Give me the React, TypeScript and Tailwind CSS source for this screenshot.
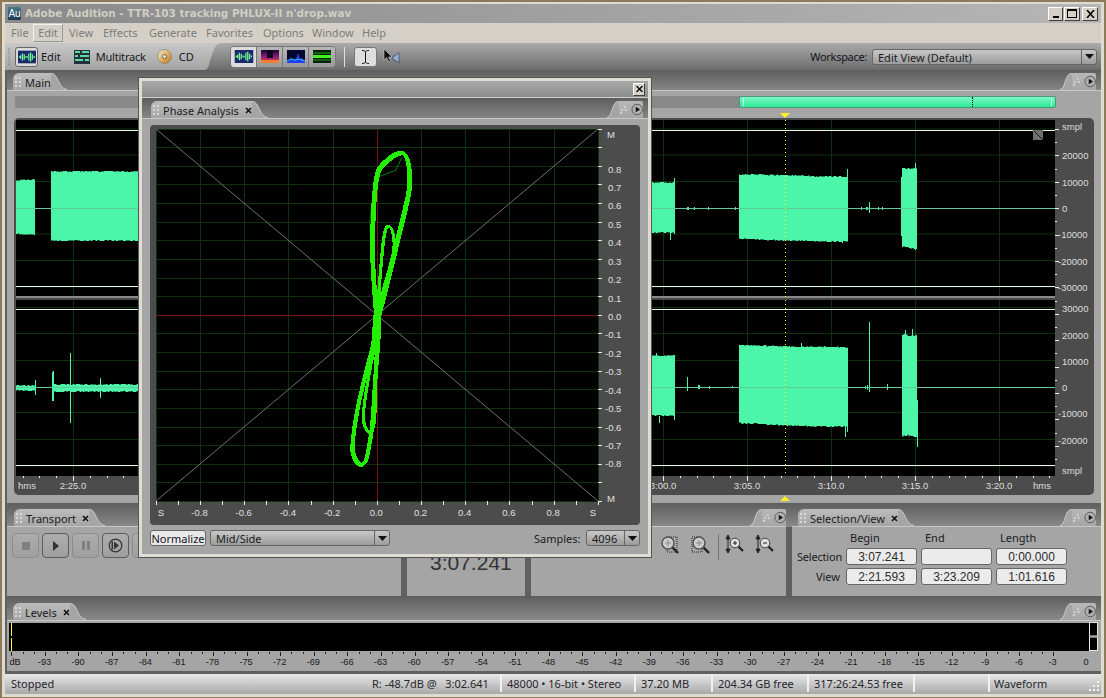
import React from "react";

const WAVE = "#4cf5a8";
let seed = 7;
const rnd = () => {
  seed = (seed * 1664525 + 1013904223) % 4294967296;
  return seed / 4294967296;
};

function block(x0: number, x1: number, t0: number, t1: number, b0: number, b1: number, j = 1.5) {
  const top: string[] = [];
  const bot: string[] = [];
  for (let x = x0; x <= x1; x++) {
    const k = (x - x0) / Math.max(1, x1 - x0);
    top.push(`${x},${Math.round(t0 + (t1 - t0) * k - rnd() * j)}`);
    bot.unshift(`${x},${Math.round(b0 + (b1 - b0) * k + rnd() * j)}`);
  }
  return top.concat(bot).join(" ");
}

function smooth(p: number[][], closed = true) {
  const n = p.length;
  const at = (i: number) => (closed ? p[(i + n) % n] : p[Math.max(0, Math.min(n - 1, i))]);
  let d = `M${p[0][0]} ${p[0][1]}`;
  for (let i = 0; i < (closed ? n : n - 1); i++) {
    const a = at(i - 1), b = at(i), c = at(i + 1), e = at(i + 2);
    d += `C${b[0] + (c[0] - a[0]) / 6} ${b[1] + (c[1] - a[1]) / 6} ${c[0] - (e[0] - b[0]) / 6} ${c[1] - (e[1] - b[1]) / 6} ${c[0]} ${c[1]}`;
  }
  return d;
}

const UPPER_BLOCKS = [
  block(16, 35, 181, 180, 233, 234),
  block(51, 139, 172, 172, 240, 240),
  block(651, 675, 183, 183, 232, 232, 1),
  block(739, 790, 175, 176, 238, 240),
  block(790, 848, 176, 178, 240, 241),
  block(902, 917, 169, 169, 246, 248),
];
const LOWER_BLOCKS = [
  block(16, 35, 386, 386, 390, 390, 1),
  block(52, 139, 385, 385, 391, 391, 1.5),
  block(651, 675, 356, 356, 415, 415, 1),
  block(739, 790, 346, 347, 422, 425),
  block(790, 848, 347, 348, 425, 426),
  block(902, 917, 336, 337, 434, 435, 3),
];
const SPIKES: number[][] = [
  [674, 178, 674, 234], [670, 232, 670, 240],
  [847, 169, 847, 236], [842, 238, 842, 243], [869, 202, 869, 213], [915, 163, 915, 240], [915, 245, 915, 250],
  [903, 177, 903, 236], [901, 177, 901, 236],
  [52, 372, 52, 401], [53, 371, 53, 401], [35, 380, 35, 395], [70, 353, 70, 423], [100, 378, 100, 398],
  [659, 416, 659, 423], [656, 353, 656, 360], [674, 355, 674, 420], [687, 377, 687, 391],
  [845, 420, 845, 437], [847, 420, 847, 432], [801, 343, 801, 350], [869, 322, 869, 392], [917, 400, 917, 447],
  [905, 330, 905, 340], [912, 329, 912, 340], [887, 384, 887, 390], [699, 385, 699, 389], [698, 385, 698, 389], [709, 386, 709, 389],
  [865, 386, 865, 389], [867, 385, 867, 390], [732, 386, 732, 388],
];
const ZERO_TICKS = [687, 688, 694, 708, 735, 861, 866, 867, 878, 882];

function Grip() {
  return (
    <svg width="8" height="13" viewBox="0 0 8 13" className="mr-[2px] shrink-0">
      {[1, 5, 9].map((y) => (
        <g key={y} fill="#d8d8d8">
          <rect x="0" y={y} width="2" height="2" />
          <rect x="4" y={y} width="2" height="2" />
        </g>
      ))}
    </svg>
  );
}

function XMark() {
  return (
    <svg width="7" height="7" viewBox="0 0 7 7" className="shrink-0">
      <path d="M1 1L6 6M6 1L1 6" stroke="#111" strokeWidth="1.6" />
    </svg>
  );
}

function Tab({ label, close = true }: { label: string; close?: boolean }) {
  return (
    <div className="flex h-[17px] items-stretch">
      <div className="flex items-center rounded-tl-[6px] bg-[linear-gradient(#bdbdbd,#a5a5a5)] pl-[2px] pt-[2px]">
        <Grip />
        <span className="text-[#1c1c22]">{label}</span>
        {close && <span className="ml-[6px] flex"><XMark /></span>}
      </div>
      <svg width="16" height="17" viewBox="0 0 16 17" className="block">
        <path d="M0 0C8 0 7 16 16 16V17H0Z" fill="#a5a5a5" />
        <path d="M0 .5C8 .5 7 16.5 16 16.5" fill="none" stroke="#c8c8c8" />
      </svg>
    </div>
  );
}

function Flyout() {
  return (
    <div className="flex h-[17px] items-stretch">
      <svg width="12" height="17" viewBox="0 0 12 17" className="block">
        <path d="M12 0C4 0 6 16 0 16V17H12Z" fill="#a5a5a5" />
        <path d="M12 .5C4 .5 6 16.5 0 16.5" fill="none" stroke="#c8c8c8" />
      </svg>
      <div className="flex w-[24px] items-center gap-[3px] rounded-tr-[2px] bg-[linear-gradient(#b8b8b8,#a5a5a5)] pl-[1px]">
        <svg width="8" height="8" viewBox="0 0 8 8" fill="#d4d4d4"><rect x="4" y="0" width="2" height="2" /><rect x="1" y="3" width="2" height="2" /><rect x="5" y="3" width="2" height="2" /><rect x="0" y="6" width="2" height="2" /></svg>
        <svg width="13" height="13" viewBox="0 0 13 13">
          <circle cx="6.5" cy="6.5" r="5.5" fill="#b0b0b0" stroke="#555" />
          <path d="M5 3.5L9.5 6.5L5 9.5Z" fill="#111" />
        </svg>
      </div>
    </div>
  );
}

function Combo({ w, label }: { w: string; label: string }) {
  return (
    <div className={`flex h-[16px] items-stretch rounded-[3px] border border-[#666] bg-[linear-gradient(#c8c8c8,#9c9c9c)] ${w}`}>
      <span className="flex-1 truncate pl-[5px] pt-[1px] leading-[14px] text-[#1a1a22]">{label}</span>
      <span className="flex w-[15px] items-center justify-center border-l border-[#666]">
        <svg width="9" height="5" viewBox="0 0 9 5"><path d="M0 0H9L4.5 5Z" fill="#111" /></svg>
      </span>
    </div>
  );
}

function TB({ children }: { children: React.ReactNode }) {
  return (
    <div className="flex h-[17px] w-[71px] items-center justify-center rounded-[3px] border border-[#666] bg-[#ebebeb] font-['Liberation_Sans'] text-[12px] text-[#2c2c2c]">
      {children}
    </div>
  );
}

function TransportBtn({ children, on }: { children: React.ReactNode; on?: boolean }) {
  return (
    <div className={`flex h-[25px] w-[27px] shrink-0 items-center justify-center rounded-[4px] border bg-[linear-gradient(#adadad,#9f9f9f)] ${on ? "border-[#5c5c5c]" : "border-[#8c8c8c]"}`}>
      {children}
    </div>
  );
}

function MiniWave({ w = 20, h = 14, bg = "#1c2a6c" }: { w?: number; h?: number; bg?: string }) {
  return (
    <svg width={w} height={h} viewBox="0 0 20 14">
      <rect width="20" height="14" fill={bg} />
      <path d="M1 7H3M3 5V9M5 3V11M7 4V10M9 6V8M10 7H11M12 3V11M14 2V12M16 4V10M18 6V8" stroke="#6cf58c" strokeWidth="1.4" />
    </svg>
  );
}

function ViewBtn({ on, children }: { on?: boolean; children: React.ReactNode }) {
  return (
    <div className={`flex h-[20px] w-[26px] items-center justify-center border-r border-[#777] last:border-r-0 ${on ? "bg-[#dcdcdc]" : "bg-[linear-gradient(#b8b8b8,#9a9a9a)]"}`}>
      {children}
    </div>
  );
}

function WaveformSvg() {
  const gridV = [73.5, 663.5, 747.5, 831.5, 915.5, 999.5];
  const gridH = [129, 155, 181.5, 234, 260.5, 287, 307.5, 333.5, 360.5, 412.5, 439.5, 466];
  const rightLabels: [string, number][] = [
    ["20000", 155], ["10000", 182], ["0", 208], ["-10000", 234], ["-20000", 261], ["-30000", 287],
    ["30000", 308], ["20000", 335], ["10000", 361], ["0", 387], ["-10000", 413], ["-20000", 440],
  ];
  const ticksL: number[] = [];
  for (let i = -3; i <= 3; i++) ticksL.push(i);
  const ticksR: number[] = [];
  for (let i = -1; i <= 23; i++) ticksR.push(i);
  const ticksY: number[] = [];
  for (let y = 129; y < 470; y += 13.2) ticksY.push(y);
  const labelsX: [string, number][] = [["2:25.0", 73], ["3:00.0", 663], ["3:05.0", 747], ["3:10.0", 831], ["3:15.0", 915], ["3:20.0", 999]];
  return (
    <svg viewBox="14 118 1080 377" width="1080" height="377" className="ml-[7px] block">
      <rect x="14" y="118" width="1080" height="377" rx="5" fill="#4c4c4c" />
      <rect x="16" y="120" width="1039" height="356" fill="#000" />
      <g stroke="#0c330c" strokeWidth="1">
        {gridV.map((x) => <line key={x} x1={x} x2={x} y1="120" y2="476" />)}
        {gridH.map((y) => <line key={y} x1="16" x2="1055" y1={y} y2={y} />)}
      </g>
      <g fill={WAVE}>
        {UPPER_BLOCKS.map((p, i) => <polygon key={i} points={p} />)}
        {LOWER_BLOCKS.map((p, i) => <polygon key={i} points={p} />)}
      </g>
      <g stroke={WAVE} strokeWidth="1" shapeRendering="crispEdges">
        {SPIKES.map((s, i) => <line key={i} x1={s[0] + 0.5} y1={s[1]} x2={s[2] + 0.5} y2={s[3]} />)}
        {ZERO_TICKS.map((x) => <line key={x} x1={x + 0.5} y1="207" x2={x + 0.5} y2="210" />)}
      </g>
      <g stroke="#5fcb98" strokeWidth="1" shapeRendering="crispEdges">
        <line x1="16" x2="1055" y1="208.5" y2="208.5" />
        <line x1="16" x2="1055" y1="387.5" y2="387.5" />
      </g>
      <g stroke="#f0f0f0" strokeWidth="1" shapeRendering="crispEdges">
        <line x1="16" x2="1055" y1="130.5" y2="130.5" />
        <line x1="16" x2="1055" y1="286.5" y2="286.5" />
        <line x1="16" x2="1055" y1="309.5" y2="309.5" />
        <line x1="16" x2="1055" y1="465.5" y2="465.5" />
      </g>
      <rect x="16" y="296" width="1039" height="2" fill="#8a8a8a" />
      <rect x="16" y="298" width="1039" height="2" fill="#484848" />
      <line x1="785.5" x2="785.5" y1="120" y2="476" stroke="#ffff30" strokeWidth="1" strokeDasharray="1 3" shapeRendering="crispEdges" />
      <path d="M1033 130H1043V140H1033Z" fill="#6e6e6e" />
      <path d="M1034 131L1043 140" stroke="#222" />
      <g stroke="#f0f0f0" shapeRendering="crispEdges">
        {ticksL.map((i) => {
          const x = Math.round(73 + i * 16.8) + 0.5;
          return <line key={i} x1={x} x2={x} y1="476" y2={i === 0 ? 481 : 478} />;
        })}
        {ticksR.map((i) => {
          const x = Math.round(663 + i * 16.8) + 0.5;
          return <line key={i} x1={x} x2={x} y1="476" y2={i % 5 === 0 ? 481 : 478} />;
        })}
        {ticksY.map((y, i) => <line key={i} x1="1055" x2={i % 2 === 0 ? 1059 : 1057} y1={Math.round(y) + 0.5} y2={Math.round(y) + 0.5} />)}
      </g>
      <g className="fill-[#dedede] font-['Liberation_Sans'] text-[9.5px]">
        <text x="18" y="489">hms</text>
        <text x="1042" y="489" textAnchor="middle">hms</text>
        <text x="1062" y="130">smpl</text>
        <text x="1062" y="474">smpl</text>
        <g textAnchor="middle">
          {labelsX.map(([t, x]) => <text key={t} x={x} y="489">{t}</text>)}
        </g>
        {rightLabels.map(([t, y], i) => (
          <text key={i} x={t.startsWith("-") ? 1058 : 1062} y={y + 4}>{t}</text>
        ))}
      </g>
    </svg>
  );
}

function PhasePlot() {
  const X = (v: number) => 377.3 + 221 * v;
  const Y = (v: number) => 315.3 - 186.2 * v;
  const hv: number[] = [];
  for (let i = -10; i <= 10; i++) hv.push(i / 10);
  const vv: number[] = [];
  for (let i = -5; i <= 5; i++) vv.push(i / 5);
  const upperO = [[376, 318], [372, 257], [373, 207], [377, 173], [387, 160], [398, 153], [405, 155], [409, 173], [408, 193], [400, 227], [392, 260], [382, 300], [377, 318]];
  const upperI = [[377, 313], [382, 250], [385, 230], [389, 226], [393, 235], [393, 253], [383, 290], [378, 313]];
  const lowerO = [[375, 316], [373, 343], [367, 367], [357, 410], [352, 447], [355, 460], [360, 465], [365, 462], [368, 450], [372, 423], [375, 377], [378, 337], [378, 316]];
  const lowerI = [[373, 353], [365, 397], [363, 420], [368, 432], [373, 427], [375, 403], [375, 367], [377, 343]];
  const green = "#22f000";
  return (
    <svg viewBox="150 125 490 400" width="490" height="400" className="block">
      <rect x="150" y="125" width="490" height="400" rx="4" fill="#4c4c4c" />
      <rect x="156" y="129" width="442" height="372" fill="#000" />
      <g stroke="#0c330c" shapeRendering="crispEdges">
        {hv.map((v) => <line key={v} x1="156" x2="598" y1={Y(v)} y2={Y(v)} />)}
        {vv.map((v) => <line key={v} y1="129" y2="501" x1={X(v)} x2={X(v)} />)}
      </g>
      <g stroke="#7a1414" shapeRendering="crispEdges">
        <line x1="156" x2="598" y1="315.5" y2="315.5" />
        <line x1="377.5" x2="377.5" y1="129" y2="501" />
      </g>
      <g stroke="#707070" strokeWidth="1">
        <line x1="156" y1="129" x2="598" y2="501" />
        <line x1="156" y1="501" x2="598" y2="129" />
      </g>
      <g fill="none" stroke="#0b7a0b" strokeWidth="1">
        <path d="M381 176L396 170L402 157" />
        <path d="M371 257L370 220L374 190" />
      </g>
      <g fill="none" stroke={green} strokeLinejoin="round" shapeRendering="crispEdges">
        <path d={smooth(upperO)} strokeWidth="3.4" />
        <path d={smooth(upperO.map(([x, y]) => [x + 1.6, y + 1.2]))} strokeWidth="3" />
        <path d={smooth(upperO.map(([x, y]) => [x - 0.8, y - 0.8]))} strokeWidth="1.6" />
        <path d={smooth(upperI)} strokeWidth="2.4" />
        <path d={smooth(upperI.map(([x, y]) => [x + 1, y + 0.5]))} strokeWidth="2" />
        <path d={smooth(lowerO)} strokeWidth="3.4" />
        <path d={smooth(lowerO.map(([x, y]) => [x + 1.2, y - 1]))} strokeWidth="3" />
        <path d={smooth(lowerI)} strokeWidth="2.4" />
        <path d={smooth(lowerI.map(([x, y]) => [x + 1, y - 0.5]))} strokeWidth="2" />
        <path d="M375 345L378 290" strokeWidth="6" />
      </g>
      <g stroke="#e8e8e8" shapeRendering="crispEdges">
        {hv.map((v) => <line key={v} x1="598" x2="602" y1={Y(v)} y2={Y(v)} />)}
        {hv.map((v) => <line key={v} y1="501" y2="505" x1={X(v)} x2={X(v)} />)}
      </g>
      <g className="fill-[#e0e0e0] font-['Liberation_Sans'] text-[9.5px]">
        {[8, 7, 6, 5, 4, 3, 2, 1, 0, -1, -2, -3, -4, -5, -6, -7, -8].map((n) => (
          <text key={n} x={n < 0 ? 605 : 608} y={320 - 18.43 * n}>{(n / 10).toFixed(1)}</text>
        ))}
        <text x="607" y="138">M</text>
        <text x="607" y="502">M</text>
        <g textAnchor="middle">
          <text x="161" y="516">S</text>
          <text x="593" y="516">S</text>
          {[-4, -3, -2, -1, 0, 1, 2, 3, 4].map((n) => (
            <text key={n} x={X(n / 5) - 1} y="516">{(n / 5).toFixed(1)}</text>
          ))}
        </g>
      </g>
    </svg>
  );
}

function LevelsSvg() {
  const ticks: number[] = [];
  for (let i = 0; i <= 93; i++) ticks.push(11.3 + i * 11.2);
  const labels: [string, number][] = [["dB", 15]];
  for (let i = 0; i <= 31; i++) labels.push([i === 31 ? "0" : `-${93 - 3 * i}`, 44.5 + i * 33.6]);
  return (
    <svg viewBox="7 622 1094 49" width="1094" height="49" className="block">
      <rect x="9" y="624" width="1089" height="28" fill="#000" />
      <g stroke="#ffff30" shapeRendering="crispEdges" strokeWidth="1">
        <line x1="11.5" x2="11.5" y1="624" y2="637" />
        <line x1="11.5" x2="11.5" y1="639" y2="652" />
      </g>
      <rect x="1089.5" y="623.5" width="8" height="13.5" fill="none" stroke="#e8e8e8" />
      <rect x="1089.5" y="638" width="8" height="13.5" fill="none" stroke="#e8e8e8" />
      <g stroke="#222" shapeRendering="crispEdges">
        {ticks.map((x, i) => <line key={i} x1={Math.round(x) + 0.5} x2={Math.round(x) + 0.5} y1="653" y2={i % 3 === 0 ? 657 : 655} />)}
      </g>
      <g className="fill-[#1a1a1a] font-['Liberation_Sans'] text-[9.2px]" textAnchor="middle">
        {labels.map(([t, x], i) => <text key={i} x={x} y="666">{t}</text>)}
      </g>
    </svg>
  );
}

function ZoomIcon({ sign, box }: { sign?: string; box?: "r" | "l" }) {
  return (
    <svg width="22" height="22" viewBox="0 0 22 22">
      {box === "r" && <rect x="8" y="3" width="10" height="15" fill="none" stroke="#222" strokeDasharray="1 1" />}
      {box === "l" && <rect x="2" y="3" width="10" height="15" fill="none" stroke="#222" strokeDasharray="1 1" />}
      <line x1="13" y1="13" x2="19" y2="19" stroke="#222" strokeWidth="2.4" />
      <circle cx="9" cy="9" r="6" fill="#d8d8d8" fillOpacity=".8" stroke="#555" strokeWidth="1.5" />
      {sign && <path d={sign === "+" ? "M6 9H12M9 6V12" : "M6 9H12"} stroke="#888" />}
    </svg>
  );
}

function VZoom({ sign }: { sign: string }) {
  return (
    <svg width="20" height="20" viewBox="0 0 20 20">
      <path d="M3 2V18M3 1L1 5H5ZM3 19L1 15H5Z" stroke="#222" fill="#222" />
      <line x1="13" y1="12" x2="18" y2="17" stroke="#222" strokeWidth="2.2" />
      <circle cx="10" cy="9" r="4.8" fill="#dedede" stroke="#444" />
      <path d={sign === "+" ? "M8 9H12M10 7V11" : "M8 9H12"} stroke="#222" />
    </svg>
  );
}

function Sep() {
  return <span className="h-full w-[2px] bg-[#f2f2f2]" />;
}

export default function App() {
  return (
    <div className="relative h-[698px] w-[1106px] overflow-hidden bg-[#8c7a58] pl-[2px] pt-[2px] font-['Noto_Sans',sans-serif] text-[11px] leading-none">
      <div className="flex h-[695px] w-[1102px] flex-col border-x-[3px] border-b-[3px] border-t-[2px] border-[#dedbd3] bg-[#606060]">
        {/* title */}
        <div className="flex h-[19px] items-center bg-[linear-gradient(90deg,#8a8a8a,#b6b6b6)]">
          <div className="ml-[2px] flex h-[15px] w-[15px] items-center justify-center rounded-[2px] border border-[#888] bg-[linear-gradient(#4a7a8e,#1a3a50)] font-['Liberation_Sans'] text-[10px] text-white">Au</div>
          <span className="ml-[3px] font-['DejaVu_Sans'] text-[10.45px] font-bold text-[#cfcfc4]">Adobe Audition - TTR-103 tracking PHLUX-II n&apos;drop.wav</span>
          <div className="ml-auto mr-[3px] flex gap-[1px]">
            <div className="flex h-[14px] w-[15px] items-end justify-center border border-b-[#404040] border-l-white border-r-[#404040] border-t-white bg-[#d4d0c8] pb-[2px]"><span className="h-[2px] w-[6px] bg-black" /></div>
            <div className="flex h-[14px] w-[16px] items-center justify-center border border-b-[#404040] border-l-white border-r-[#404040] border-t-white bg-[#d4d0c8]"><span className="h-[9px] w-[10px] border border-t-2 border-black" /></div>
            <div className="ml-[1px] flex h-[14px] w-[16px] items-center justify-center border border-b-[#404040] border-l-white border-r-[#404040] border-t-white bg-[#d4d0c8]">
              <svg width="9" height="8" viewBox="0 0 9 8"><path d="M1 0L8 8M8 0L1 8" stroke="#000" strokeWidth="1.6" /></svg>
            </div>
          </div>
        </div>
        {/* menu */}
        <div className="flex h-[20px] items-center bg-[#d4d0c8] pb-[1px] text-[#7c7c78]">
          <span className="ml-[6px] w-[22px]">File</span>
          <span className="flex h-[18px] w-[30px] items-center justify-center border border-[#f4f2ec] border-b-[#999] border-r-[#999]">Edit</span>
          <span className="ml-[6px] w-[34px]">View</span>
          <span className="w-[46px]">Effects</span>
          <span className="w-[57px]">Generate</span>
          <span className="w-[57px]">Favorites</span>
          <span className="w-[49px]">Options</span>
          <span className="w-[50px]">Window</span>
          <span>Help</span>
        </div>
        {/* toolbar */}
        <div className="flex h-[27px] items-stretch bg-[linear-gradient(#ababab,#6c6c6c)] text-[#161620]">
          <div className="flex w-[200px] items-center bg-[linear-gradient(#c8c8c8,#a4a4a4)]">
            <svg width="2" height="18" className="ml-[3px]"><path d="M1 0V18" stroke="#777" strokeDasharray="1 1" /></svg>
            <div className="ml-[5px] flex h-[20px] w-[23px] items-center justify-center rounded-[3px] border border-[#666] bg-[#dadada]"><MiniWave w={18} h={14} /></div>
            <span className="ml-[3px]">Edit</span>
            <svg width="16" height="14" viewBox="0 0 16 14" className="ml-[13px]">
              <rect width="16" height="14" fill="#223040" />
              <path d="M1 2H6M8 2H15M1 6H4M6 6H15M1 10H9M11 10H15" stroke="#5cdc9c" strokeWidth="2" />
            </svg>
            <span className="ml-[6px] tracking-[-0.2px]">Multitrack</span>
            <svg width="15" height="15" viewBox="0 0 15 15" className="ml-[11px]">
              <defs><linearGradient id="cd" x1="0" y1="0" x2="1" y2="1"><stop offset="0" stopColor="#f0f0e0" /><stop offset=".5" stopColor="#e0b060" /><stop offset="1" stopColor="#b87820" /></linearGradient></defs>
              <circle cx="7.5" cy="7.5" r="7" fill="url(#cd)" stroke="#777" strokeWidth=".6" />
              <circle cx="7.5" cy="7.5" r="2" fill="#e8e8e8" stroke="#666" />
            </svg>
            <span className="ml-[7px]">CD</span>
          </div>
          <svg width="15" height="27" viewBox="0 0 15 27" className="block">
            <defs><linearGradient id="tb" x1="0" y1="0" x2="0" y2="1"><stop offset="0" stopColor="#c8c8c8" /><stop offset="1" stopColor="#a4a4a4" /></linearGradient></defs>
            <path d="M0 0H15C9 2 8 10 5 18C4 23 2 27 0 27Z" fill="url(#tb)" />
          </svg>
          <div className="ml-[10px] flex h-[22px] items-center self-center overflow-hidden rounded-[4px] border border-[#777]">
            <ViewBtn on><MiniWave w={20} h={13} /></ViewBtn>
            <ViewBtn>
              <svg width="18" height="13" viewBox="0 0 18 13">
                <defs><linearGradient id="sp" x1="0" y1="0" x2="0" y2="1"><stop offset="0" stopColor="#12062c" /><stop offset=".5" stopColor="#8a1a80" /><stop offset="1" stopColor="#f04040" /></linearGradient></defs>
                <rect width="18" height="13" fill="url(#sp)" />
                <path d="M6 0H12V8H6Z" fill="#100420" />
                <path d="M0 13V10H18V13Z" fill="#f08030" />
              </svg>
            </ViewBtn>
            <ViewBtn>
              <svg width="18" height="13" viewBox="0 0 18 13">
                <rect width="18" height="13" fill="#06062c" />
                <path d="M0 13V11L3 10L4 7L6 10L9 9L11 3L13 9L15 8L18 11V13Z" fill="#2040ff" />
                <path d="M0 11L4 9L8 10L12 9L18 11" stroke="#30c0ff" fill="none" />
              </svg>
            </ViewBtn>
            <ViewBtn>
              <svg width="18" height="13" viewBox="0 0 18 13">
                <rect width="18" height="13" fill="#062006" />
                <path d="M0 3H18M0 10H18" stroke="#18a018" />
                <path d="M0 6.5H18" stroke="#40f020" strokeWidth="3" />
              </svg>
            </ViewBtn>
          </div>
          <span className="ml-[8px] h-[20px] w-[1px] self-center bg-[#e0e0e0]" />
          <div className="ml-[9px] flex h-[20px] w-[23px] items-center justify-center self-center rounded-[3px] border border-[#777] bg-[#dedede]">
            <svg width="9" height="14" viewBox="0 0 9 14"><path d="M1 .5C3 .5 4.5 1 4.5 2.5V11.5C4.5 13 3 13.5 1 13.5M8 .5C6 .5 4.5 1 4.5 2.5M4.5 11.5C4.5 13 6 13.5 8 13.5" fill="none" stroke="#111" /></svg>
          </div>
          <svg width="17" height="17" viewBox="0 0 17 17" className="ml-[6px] self-center">
            <path d="M1 1V12L3.5 9.5L6 14L7.5 13L5.5 9H9Z" fill="#111" stroke="#ddd" strokeWidth=".5" />
            <path d="M10 8H12L16 4.5V15L12 12H10Z" fill="#8fb0d8" stroke="#334" strokeWidth=".6" />
          </svg>
          <span className="ml-auto self-center tracking-[-0.3px] text-[#14141c]">Workspace:</span>
          <div className="ml-[5px] mr-[4px] self-center"><Combo w="w-[225px]" label="Edit View (Default)" /></div>
        </div>

        {/* body */}
        <div className="flex flex-1 flex-col pl-[2px]">
          {/* main panel */}
          <div className="h-[21px] border-b border-[#c8c8c8] bg-[linear-gradient(#5e5e5e,#858585)] pl-[6px] pr-[5px]">
            <div className="flex h-[20px] items-end justify-between">
              <Tab label="Main" close={false} />
              <Flyout />
            </div>
          </div>
          <div className="h-[412px] bg-[#a5a5a5]">
            <div className="ml-[8px] mt-[5px] flex h-[12px] w-[1041px] rounded-[2px] bg-[#888]">
              <div className="relative ml-[724px] w-[317px] rounded-[2px] border border-[#4a9a78] bg-[linear-gradient(#7cf8c4,#2cea98)]">
                <span className="absolute left-[232px] top-0 h-full border-l border-dotted border-black" />
                <span className="absolute left-[3px] top-[1px] h-[8px] w-[1px] bg-[#c8fce4]" />
                <span className="absolute right-[3px] top-[1px] h-[8px] w-[1px] bg-[#c8fce4]" />
              </div>
            </div>
            <div className="h-[10px] pl-[773px] pt-[5px]">
              <svg width="10" height="5" viewBox="0 0 10 5" className="block"><path d="M0 0H10L5 5Z" fill="#f8f020" /></svg>
            </div>
            <WaveformSvg />
            <div className="pl-[773px] pt-[1px]">
              <svg width="10" height="5" viewBox="0 0 10 5" className="block"><path d="M0 5H10L5 0Z" fill="#f8f020" /></svg>
            </div>
          </div>

          {/* bottom panels */}
          <div className="flex h-[93px] gap-[6px] bg-[linear-gradient(#5e5e5e,#8a8a8a_24px,#606060_24px)]">
            <div className="w-[394px]">
              <div className="flex h-[24px] items-end border-b border-[#c8c8c8] pl-[7px]"><Tab label="Transport" /></div>
              <div className="flex h-[69px] gap-[3px] bg-[#a5a5a5] pl-[5px] pt-[6px]">
                <TransportBtn><span className="h-[8px] w-[8px] bg-[#808080]" /></TransportBtn>
                <TransportBtn on><svg width="8" height="10" viewBox="0 0 8 10"><path d="M1 0L7 5L1 10Z" fill="#333" /></svg></TransportBtn>
                <TransportBtn><span className="flex gap-[2px]"><span className="h-[9px] w-[3px] bg-[#808080]" /><span className="h-[9px] w-[3px] bg-[#808080]" /></span></TransportBtn>
                <TransportBtn on>
                  <svg width="15" height="15" viewBox="0 0 15 15"><circle cx="7.5" cy="7.5" r="6.3" fill="none" stroke="#333" strokeWidth="1.2" /><path d="M6 3.5L11 7.5L6 11.5Z" fill="#333" /><rect x="3.5" y="3.5" width="1.5" height="8" fill="#333" /></svg>
                </TransportBtn>
                <TransportBtn>{null}</TransportBtn>
              </div>
            </div>
            <div className="w-[118px]">
              <div className="h-[24px]" />
              <div className="h-[69px] bg-[#a5a5a5] pl-[23px] pt-[25px] font-['Liberation_Sans'] text-[21px] text-[#333]">3:07.241</div>
            </div>
            <div className="w-[255px]">
              <div className="flex h-[24px] items-end justify-end border-b border-[#c8c8c8]"><Flyout /></div>
              <div className="flex h-[69px] items-start bg-[#a5a5a5] pl-[128px] pt-[7px]">
                <ZoomIcon sign="+" box="r" />
                <span className="ml-[9px]"><ZoomIcon sign="+" box="l" /></span>
                <span className="ml-[6px] h-[26px] w-[1px] bg-[#777]" />
                <span className="ml-[6px]"><VZoom sign="+" /></span>
                <span className="ml-[10px]"><VZoom sign="-" /></span>
              </div>
            </div>
            <div className="w-[309px]">
              <div className="flex h-[24px] items-end justify-between border-b border-[#c8c8c8] pl-[6px] pr-[5px]"><Tab label="Selection/View" /><Flyout /></div>
              <div className="h-[69px] bg-[#a5a5a5] pl-[5px] pt-[5px] text-[#1c1c22]">
                <div className="grid grid-cols-[45px_71px_71px_71px] gap-x-[4px] gap-y-[3px]">
                  <span className="h-[13px]" />
                  <span className="pl-[4px]">Begin</span>
                  <span className="pl-[4px]">End</span>
                  <span className="pl-[4px]">Length</span>
                  <span className="self-center pr-[2px] text-right tracking-[-0.2px]">Selection</span>
                  <TB>3:07.241</TB>
                  <TB>{""}</TB>
                  <TB>0:00.000</TB>
                  <span className="self-center pr-[2px] text-right">View</span>
                  <TB>2:21.593</TB>
                  <TB>3:23.209</TB>
                  <TB>1:01.616</TB>
                </div>
              </div>
            </div>
          </div>

          {/* levels */}
          <div className="flex h-[25px] items-end justify-between border-b border-[#c8c8c8] bg-[linear-gradient(#5e5e5e,#8a8a8a)] pl-[6px] pr-[5px]">
            <Tab label="Levels" />
            <Flyout />
          </div>
          <div className="h-[50px] bg-[#a5a5a5]"><LevelsSvg /></div>
          <div className="h-[3px] bg-[#606060]" />
        </div>
        {/* status */}
        <div className="flex h-[20px] items-center bg-[linear-gradient(#e8e8e8,#a8a8a8)] pb-[2px] text-[#26262c]">
          <span className="ml-[6px] w-[361px]">Stopped</span>
          <span className="w-[128px] whitespace-pre">R: -48.7dB @   3:02.641</span>
          <Sep />
          <span className="ml-[5px] w-[127px]">48000 • 16-bit • Stereo</span>
          <Sep />
          <span className="ml-[5px] w-[70px]">37.20 MB</span>
          <Sep />
          <span className="ml-[5px] w-[89px]">204.34 GB free</span>
          <Sep />
          <span className="ml-[5px] w-[99px]">317:26:24.53 free</span>
          <Sep />
          <span className="w-[73px]" />
          <Sep />
          <span className="ml-[4px]">Waveform</span>
          <svg width="11" height="11" viewBox="0 0 11 11" className="ml-auto mr-[1px] self-end" fill="#f4f4f4">
            <rect x="8" y="0" width="2" height="2" /><rect x="4" y="4" width="2" height="2" /><rect x="8" y="4" width="2" height="2" /><rect x="0" y="8" width="2" height="2" /><rect x="4" y="8" width="2" height="2" /><rect x="8" y="8" width="2" height="2" />
          </svg>
        </div>
      </div>

      {/* floating Phase Analysis window */}
      <div className="absolute left-[139px] top-[78px] flex h-[479px] w-[512px] flex-col border-[3px] border-[#e0ddd4] shadow-[0_0_0_1px_#555]">
        <div className="flex h-[17px] items-center justify-end border-b border-[#d0d0d0] bg-[linear-gradient(#a8a8a8,#8c8c8c)] pr-[3px]">
          <div className="flex h-[13px] w-[12px] items-center justify-center border border-b-[#404040] border-l-white border-r-[#404040] border-t-white bg-[#d4d0c8]">
            <svg width="7" height="6" viewBox="0 0 7 6"><path d="M.5 0L6.5 6M6.5 0L.5 6" stroke="#000" strokeWidth="1.3" /></svg>
          </div>
        </div>
        <div className="flex h-[21px] items-end justify-between border-b border-[#c8c8c8] bg-[linear-gradient(#5e5e5e,#858585)] pl-[9px] pr-[5px]">
          <Tab label="Phase Analysis" />
          <Flyout />
        </div>
        <div className="flex-1 bg-[#a5a5a5] pl-[8px] pt-[6px]">
          <PhasePlot />
          <div className="mt-[5px] flex items-center">
            <div className="flex h-[16px] w-[56px] items-center justify-center rounded-[3px] border border-[#666] bg-[#e8e8e8] pt-[1px] text-[#14141c]">Normalize</div>
            <div className="ml-[4px]"><Combo w="w-[180px]" label="Mid/Side" /></div>
            <span className="ml-[144px] w-[52px] pt-[1px] text-[#1c1c22]">Samples:</span>
            <Combo w="w-[54px]" label="4096" />
          </div>
        </div>
      </div>
    </div>
  );
}
